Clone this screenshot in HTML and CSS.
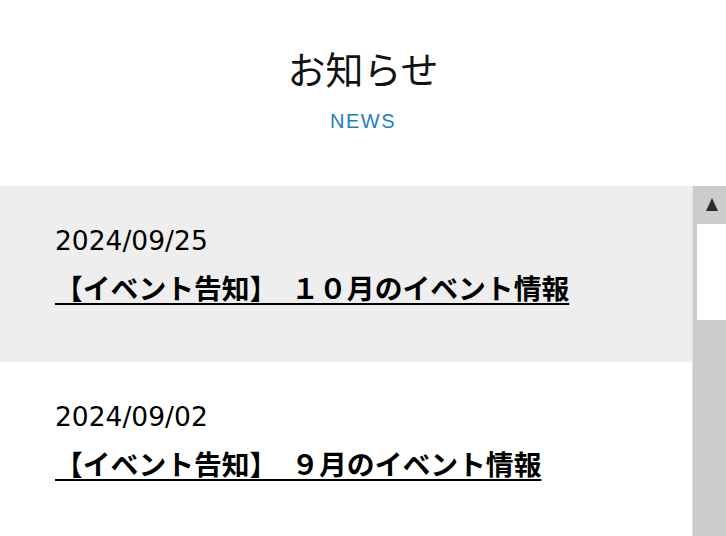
FILE: index.html
```html
<!DOCTYPE html>
<html lang="ja">
<head>
<meta charset="utf-8">
<title>お知らせ</title>
<link rel="stylesheet" href="styles.css">
</head>
<body>
<section class="news">
  <header class="news-head">
    <h2 class="news-title">お知らせ</h2>
    <p class="news-sub">NEWS</p>
  </header>
  <div class="news-scroll">
    <ul class="news-list">
      <li class="news-item"><a href="#"><time class="news-date">2024/09/25</time><span class="news-link">【イベント告知】　１０月のイベント情報</span></a></li>
      <li class="news-item"><a href="#"><time class="news-date">2024/09/02</time><span class="news-link">【イベント告知】　９月のイベント情報</span></a></li>
    </ul>
    <div class="scrollbar" aria-hidden="true">
      <div class="scrollbar-btn"><span class="arrow-up"></span></div>
      <div class="scrollbar-track"><div class="scrollbar-thumb"></div></div>
    </div>
  </div>
</section>
</body>
</html>
```
FILE: styles.css
```css
html, body {
  margin: 0;
  padding: 0;
  background: #fff;
  overflow: hidden;
}
body {
  font-family: "DejaVu Sans", "Noto Sans CJK JP", sans-serif;
  color: #000;
}
.news-head {
  text-align: center;
  padding-top: 42px;
  height: 186px;
  box-sizing: border-box;
}
.news-title {
  margin: 0;
  font-family: "Noto Sans CJK JP", sans-serif;
  font-weight: 400;
  font-size: 38px;
  line-height: 52px;
  color: #111;
}
.news-sub {
  margin: 15px 0 0;
  font-family: "Liberation Sans", Arial, sans-serif;
  font-size: 20px;
  line-height: 24px;
  letter-spacing: 1.5px;
  color: #1a7fc9;
}
.news-scroll {
  display: flex;
  height: 350px;
}
.news-list {
  flex: 1;
  list-style: none;
  margin: 0;
  padding: 0;
  overflow: hidden;
}
.news-item {
  height: 176px;
  box-sizing: border-box;
  padding: 35px 55px 0;
}
.news-item:nth-child(odd) {
  background: #eee;
}
.news-item a {
  display: flex;
  flex-direction: column;
  align-items: flex-start;
  color: #000;
  text-decoration: none;
}
.news-date {
  font-size: 26.5px;
  line-height: 39px;
}
.news-link {
  margin-top: 7px;
  font-family: "Noto Sans CJK JP", sans-serif;
  font-weight: 700;
  font-size: 27.8px;
  line-height: 40px;
  text-decoration: underline;
  text-decoration-thickness: 2px;
  text-underline-offset: 4px;
}
.scrollbar {
  width: 34px;
  display: flex;
  flex-direction: column;
  background: #ccc;
  border-left: 1px solid #e2e2e2;
  box-sizing: border-box;
}
.scrollbar-btn {
  height: 38px;
  display: flex;
  align-items: center;
  justify-content: center;
  padding-left: 5px;
}
.arrow-up {
  width: 0;
  height: 0;
  border-left: 6.5px solid transparent;
  border-right: 6.5px solid transparent;
  border-bottom: 13px solid #2b2b2b;
  margin-top: -2px;
}
.scrollbar-track {
  flex: 1;
  padding-left: 4px;
}
.scrollbar-thumb {
  height: 96px;
  background: #fff;
}
```
